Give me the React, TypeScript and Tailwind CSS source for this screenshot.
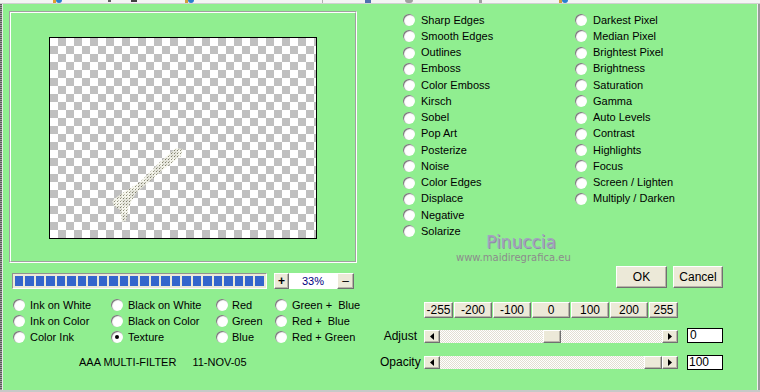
import React from "react";

const font = { fontFamily: '"Liberation Sans", Arial, sans-serif' };

function Radio({ checked = false }: { checked?: boolean }) {
  return (
    <span className="flex h-[12px] w-[12px] shrink-0 items-center justify-center rounded-full bg-white shadow-[inset_1px_1px_1px_#6e6e6e]">
      {checked && <span className="h-[4px] w-[4px] rounded-full bg-black" />}
    </span>
  );
}

const btn =
  "flex items-center justify-center bg-[#ece9d8] border border-t-white border-l-white border-r-[#707070] border-b-[#707070] shadow-[inset_-1px_-1px_0_#b8b4a8] text-[11px] text-black leading-none";

function Arrow({ dir }: { dir: "l" | "r" }) {
  return (
    <div className={`${btn} w-[16px] h-full shrink-0`}>
      <svg width="4" height="7" viewBox="0 0 4 7">
        {dir === "l" ? <path d="M4 0 L0 3.5 L4 7 Z" fill="#000" /> : <path d="M0 0 L4 3.5 L0 7 Z" fill="#000" />}
      </svg>
    </div>
  );
}

function Scroll({ thumb }: { thumb: "mid" | "end" }) {
  return (
    <div className="flex h-[13px] w-[254px]">
      <Arrow dir="l" />
      <div
        className={`flex flex-1 bg-[repeating-conic-gradient(#ffffff_0_25%,#e2ded2_0_50%)] bg-size-[2px_2px] ${
          thumb === "end" ? "justify-end" : ""
        }`}
      >
        <div className={`${btn} h-full w-[18px] ${thumb === "mid" ? "ml-[103px]" : ""}`} />
      </div>
      <Arrow dir="r" />
    </div>
  );
}

const colA = [
  "Sharp Edges",
  "Smooth Edges",
  "Outlines",
  "Emboss",
  "Color Emboss",
  "Kirsch",
  "Sobel",
  "Pop Art",
  "Posterize",
  "Noise",
  "Color Edges",
  "Displace",
  "Negative",
  "Solarize",
];
const colB = [
  "Darkest Pixel",
  "Median Pixel",
  "Brightest Pixel",
  "Brightness",
  "Saturation",
  "Gamma",
  "Auto Levels",
  "Contrast",
  "Highlights",
  "Focus",
  "Screen / Lighten",
  "Multiply / Darken",
];

const leftRadios: [string, boolean][] = [
  ["Ink on White", false],
  ["Black on White", false],
  ["Red", false],
  ["Green +  Blue", false],
  ["Ink on Color", false],
  ["Black on Color", false],
  ["Green", false],
  ["Red +  Blue", false],
  ["Color Ink", false],
  ["Texture", true],
  ["Blue", false],
  ["Red + Green", false],
];

export default function App() {
  const segs = Array.from({ length: 24 });
  return (
    <div className="relative flex h-[392px] w-[760px] flex-col overflow-hidden bg-[#90ee90] text-[11px] text-black" style={font}>
      {/* top strip remnants */}
      <div className="flex h-[4px] shrink-0 items-start bg-[#f4f4f4] border-b border-[#d0d0d0]">
        <span className="ml-[53px] h-[3px] w-[3px] bg-[#e0a030]" />
        <span className="h-[3px] w-[6px] rounded-b bg-[#2a7fd0]" />
        <span className="ml-[46px] h-[2px] w-[3px] bg-[#606060]" />
        <span className="ml-[20px] h-[2px] w-[6px] bg-[#404040]" />
        <span className="ml-[48px] h-[3px] w-[3px] bg-[#d0a040]" />
        <span className="h-[3px] w-[6px] rounded-b bg-[#2a7fd0]" />
        <span className="ml-[128px] h-[3px] w-[1px] bg-[#b0b0b0]" />
        <span className="ml-[42px] h-[3px] w-[6px] bg-[#5070b0]" />
        <span className="ml-[34px] h-[3px] w-[8px] rounded-b bg-[#a0a0a0]" />
        <span className="ml-[66px] h-[3px] w-[3px] bg-[#a0a0a0]" />
        <span className="ml-[77px] h-[3px] w-[3px] bg-[#d0a040]" />
        <span className="h-[3px] w-[6px] rounded-b bg-[#2a7fd0]" />
      </div>

      <div className="flex flex-1">
        {/* left window edge */}
        <div className="w-[2px] shrink-0 bg-[repeating-linear-gradient(#5a5a5a_0_1px,#9a9a9a_1px_2px)]" />
        <div className="w-[1px] shrink-0 bg-[#e8e8e8]" />

        {/* left column */}
        <div className="flex w-[377px] shrink-0 flex-col">
          {/* preview frame */}
          <div className="ml-[6px] mt-[7px] h-[252px] w-[348px] border border-t-[#a0a0a0] border-l-[#a0a0a0] border-r-white border-b-white">
            <div className="h-full w-full border border-t-white border-l-white border-r-[#a0a0a0] border-b-[#a0a0a0] pl-[38px] pt-[24px]">
              <div className="relative h-[202px] w-[268px] border border-black bg-[conic-gradient(#c0c0c0_25%,#ffffff_0_50%,#c0c0c0_0_75%,#ffffff_0)] bg-size-[16px_16px]">
                <svg className="absolute inset-0" width="266" height="200" viewBox="0 0 266 200">
                  <defs>
                    <pattern id="dots" width="3" height="3" patternUnits="userSpaceOnUse">
                      <rect width="3" height="3" fill="#f2f2e6" />
                      <rect x="1" y="1" width="1" height="1" fill="#6a6a50" />
                      <rect x="2" y="0" width="1" height="1" fill="#b0b098" />
                    </pattern>
                  </defs>
                  <polygon
                    points="62,163 68,158 90,144 100,134 110,124 126,110 133,111 131,118 114,131 101,142 86,155 79,168 76,183 72,184 70,172 64,168"
                    fill="url(#dots)"
                    opacity="0.75"
                  />
                </svg>
              </div>
            </div>
          </div>

          {/* progress row */}
          <div className="ml-[9px] mt-[10px] flex h-[16px] items-stretch">
            <div className="flex w-[255px] gap-[2px] border border-t-[#909090] border-l-[#909090] border-r-white border-b-white bg-[#ece9d8] p-[2px]">
              {segs.map((_, i) => (
                <div key={i} className="flex-1 bg-[#3366cc]" />
              ))}
            </div>
            <div className={`${btn} ml-[7px] w-[15px] font-bold text-[12px]`}>+</div>
            <div className="flex w-[48px] items-center justify-center bg-white text-[11px] text-[#000080]">33%</div>
            <div className={`${btn} w-[17px] text-[12px]`}>–</div>
          </div>

          {/* radio grid */}
          <div className="mt-[8px] grid grid-cols-[98px_105px_59px_auto] pl-[10px]">
            {leftRadios.map(([label, checked], i) => (
              <div key={i} className={`flex h-[16px] items-center ${i % 4 === 2 ? "gap-[4px]" : "gap-[5px]"}`}>
                <Radio checked={checked} />
                <span className="whitespace-pre leading-none">{label}</span>
              </div>
            ))}
          </div>

          {/* footer */}
          <div className="ml-[76px] mt-[12px] flex gap-[16px] leading-none">
            <span>AAA MULTI-FILTER</span>
            <span>11-NOV-05</span>
          </div>
        </div>

        {/* right column */}
        <div className="flex flex-1 flex-col">
          <div className="flex pl-[23px] pt-[8px]">
            <div className="flex w-[172px] flex-col">
              {colA.map((t) => (
                <div key={t} className="flex h-[16.25px] items-center gap-[6px]">
                  <Radio />
                  <span className="leading-none">{t}</span>
                </div>
              ))}
            </div>
            <div className="flex flex-col">
              {colB.map((t) => (
                <div key={t} className="flex h-[16.25px] items-center gap-[6px]">
                  <Radio />
                  <span className="leading-none">{t}</span>
                </div>
              ))}
            </div>
          </div>

          {/* OK / Cancel */}
          <div className="ml-[236px] mt-[26.5px] flex h-[22px] gap-[6px]">
            <div className={`${btn} w-[51px] text-[12px]`}>OK</div>
            <div className={`${btn} w-[50px] text-[12px]`}>Cancel</div>
          </div>

          {/* value buttons */}
          <div className="ml-[44px] mt-[14px] flex h-[16px] gap-[1px]">
            {["-255", "-200", "-100", "0", "100", "200", "255"].map((v, i) => (
              <div key={v} className={`${btn} ${i === 0 || i === 6 ? "w-[29px]" : "w-[38px]"} text-[12px]`}>
                {v}
              </div>
            ))}
          </div>

          {/* Adjust */}
          <div className="mt-[10px] flex h-[15px] items-start">
            <span className="mr-[7px] mt-[2px] w-[37px] text-right text-[12px] leading-[13px]">Adjust</span>
            <div className="mt-[2px]">
              <Scroll thumb="mid" />
            </div>
            <div className="ml-[9px] h-[15px] w-[36px] border border-black bg-white pl-[2px] text-[12px] leading-[13px]">0</div>
          </div>

          {/* Opacity */}
          <div className="mt-[12px] flex h-[15px] items-start">
            <span className="mr-[7px] mt-[1px] w-[37px] text-right text-[12px] leading-[13px]">Opacity</span>
            <div className="mt-[1px]">
              <Scroll thumb="end" />
            </div>
            <div className="ml-[9px] h-[15px] w-[36px] border border-black bg-white pl-[1px] text-[12px] leading-[13px]">100</div>
          </div>
        </div>

        {/* right window edge */}
        <div className="w-[1px] shrink-0 bg-[#f0f0f0]" />
        <div className="w-[2px] shrink-0 bg-[#9a9a9a]" />
      </div>

      <div className="h-[2px] shrink-0 bg-[#c8c8c8]" />

      {/* watermark */}
      <div className="pointer-events-none absolute left-[486px] top-[232px] flex flex-col items-start" style={{ fontFamily: '"DejaVu Sans", sans-serif' }}>
        <span className="text-[17px] leading-[20px] text-[#a4a4be] [text-shadow:1px_1px_0_#8c8ca8]">Pinuccia</span>
        <span className="-ml-[30px] text-[10px] leading-[12px] text-[#8c8c8c]">www.maidiregrafica.eu</span>
      </div>
    </div>
  );
}
